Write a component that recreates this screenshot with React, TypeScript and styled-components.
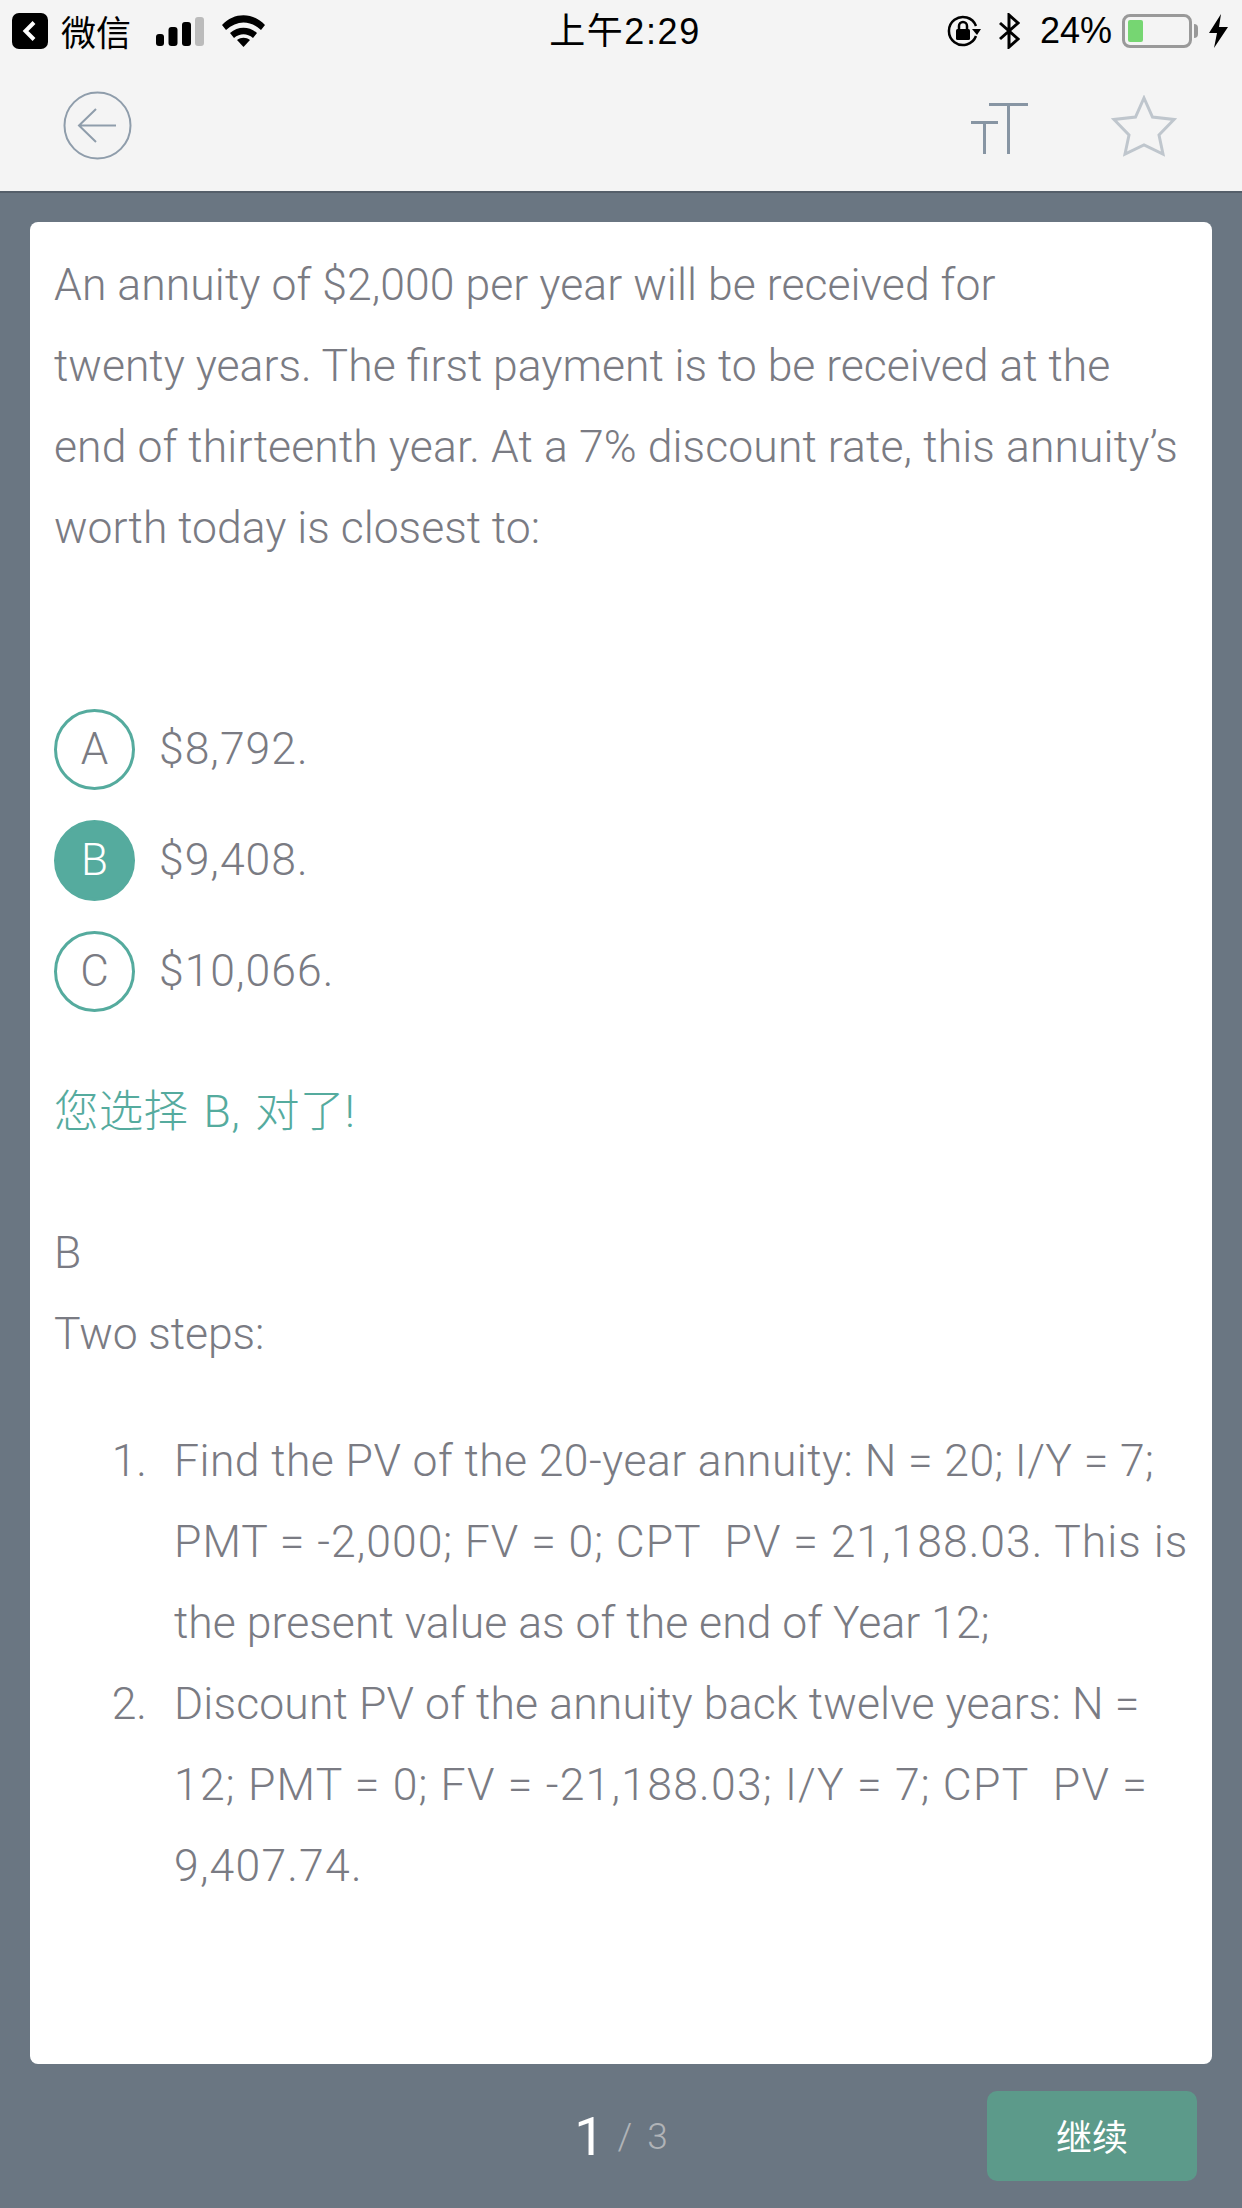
import React from "react";
import styled, { createGlobalStyle } from "styled-components";

const GlobalStyle = createGlobalStyle`
  html, body {
    margin: 0;
    padding: 0;
    background: #6a7682;
  }
  * {
    box-sizing: border-box;
  }
`;

const FONT = `Roboto, "Noto Sans CJK SC", sans-serif`;
const TEAL = "#55ab9e";
const INK = "#7a7b83";

const Page = styled.div`
  width: 1242px;
  height: 2208px;
  display: flex;
  flex-direction: column;
  overflow: hidden;
  background: #6a7682;
  font-family: ${FONT};
`;

const StatusBar = styled.div`
  height: 64px;
  padding: 0 14px 2px 12px;
  display: grid;
  grid-template-columns: 1fr auto 1fr;
  align-items: center;
  background: #f4f4f4;
  color: #000;
`;

const StatusLeft = styled.div`
  display: flex;
  align-items: center;
`;

const StatusRight = styled.div`
  display: flex;
  align-items: center;
  justify-content: flex-end;
`;

const BackChip = styled.svg`
  width: 36px;
  height: 36px;
  margin-right: 13px;
`;

const CarrierText = styled.span`
  font-family: "Noto Sans CJK SC", sans-serif;
  font-size: 35px;
  line-height: 40px;
  margin-right: 25px;
`;

const SignalBars = styled.svg`
  width: 48px;
  height: 29px;
  margin-right: 18px;
`;

const Clock = styled.span`
  font-family: "Liberation Sans", "Noto Sans CJK SC", sans-serif;
  font-size: 36px;
  line-height: 40px;
  letter-spacing: 1.6px;
  margin-left: 10px;
  padding-top: 2px;
`;

const RotationLock = styled.svg`
  width: 36px;
  height: 32px;
  margin-right: 17px;
`;

const BatteryPercent = styled.span`
  font-family: "Liberation Sans", sans-serif;
  font-size: 36px;
  line-height: 40px;
  margin: 0 10px 0 20px;
`;

const Battery = styled.div`
  position: relative;
  width: 70px;
  height: 34px;
  padding: 3px;
  border: 3px solid #999;
  border-radius: 8px;
  margin-right: 17px;

  &::before {
    content: "";
    display: block;
    width: 15px;
    height: 22px;
    background: #76d672;
    border-radius: 2px;
  }

  &::after {
    content: "";
    position: absolute;
    right: -9px;
    top: 7px;
    width: 4px;
    height: 14px;
    background: #999;
    border-radius: 0 4px 4px 0;
  }
`;

const Header = styled.header`
  height: 129px;
  flex: none;
  display: flex;
  align-items: center;
  padding: 0 65px 4px 63px;
  background: #f4f4f4;
  border-bottom: 2px solid #555f6a;
`;

const HeaderSpacer = styled.div`
  flex: 1;
`;

const FontIcon = styled.svg`
  width: 58px;
  height: 52px;
  margin: 7px 82px 0 0;
`;

const Card = styled.main`
  margin: 29px 30px 0;
  height: 1842px;
  flex: none;
  padding: 23px 24px 0;
  background: #fff;
  border-radius: 8px;
  color: ${INK};
  font-size: 44.5px;
  font-weight: 300;
  line-height: 81px;
`;

const TextLine = styled.div<{ $tracking?: number }>`
  white-space: nowrap;
  letter-spacing: ${({ $tracking }) => $tracking ?? 0}px;
`;

const OptionList = styled.div`
  margin-top: 140px;
  display: flex;
  flex-direction: column;
  gap: 30px;
`;

const OptionRow = styled.div`
  display: flex;
  align-items: center;
  gap: 24px;
  height: 81px;
  letter-spacing: 1px;
`;

const OptionBadge = styled.div<{ $selected?: boolean }>`
  width: 81px;
  height: 81px;
  display: flex;
  align-items: center;
  justify-content: center;
  border-radius: 50%;
  border: 3px solid ${TEAL};
  background: ${({ $selected }) => ($selected ? TEAL : "#fff")};
  color: ${({ $selected }) => ($selected ? "#fff" : INK)};
  font-size: 44px;
  letter-spacing: 0;
`;

const Feedback = styled.div`
  margin-top: 60px;
  color: ${TEAL};
  word-spacing: 4px;
  letter-spacing: 0.3px;
`;

const Explanation = styled.div`
  margin-top: 60px;
`;

const Steps = styled.ol`
  margin: 46px 0 0;
  padding: 0;
  list-style: none;
`;

const Step = styled.li`
  display: flex;
`;

const StepNumber = styled.span`
  width: 120px;
  padding-right: 27px;
  flex: none;
  text-align: right;
`;

const Footer = styled.footer`
  flex: 1;
  display: grid;
  grid-template-columns: 1fr auto 1fr;
  align-items: start;
  padding: 27px 45px 0;
`;

const Pager = styled.div`
  grid-column: 2;
  display: flex;
  align-items: center;
  height: 90px;
  color: #b0b3b7;
  font-size: 37px;
  font-weight: 300;
`;

const PagerCurrent = styled.span`
  color: #fff;
  font-size: 54px;
  font-weight: 400;
  margin-right: 13px;
`;

const PagerTotal = styled.span`
  margin-left: 15px;
`;

const ContinueButton = styled.button`
  grid-column: 3;
  justify-self: end;
  width: 210px;
  height: 90px;
  padding: 0 0 3px;
  border: 0;
  border-radius: 10px;
  background: #5c9a8a;
  color: #fff;
  font-family: ${FONT};
  font-size: 36px;
  font-weight: 400;
`;

const question = [
  { text: "An annuity of $2,000 per year will be received for", tracking: 0.07 },
  { text: "twenty years. The first payment is to be received at the", tracking: 0 },
  { text: "end of thirteenth year. At a 7% discount rate, this annuity’s", tracking: 0.11 },
  { text: "worth today is closest to:", tracking: 0 },
];

const options = [
  { key: "A", text: "$8,792." },
  { key: "B", text: "$9,408.", selected: true },
  { key: "C", text: "$10,066." },
];

const steps = [
  {
    n: "1.",
    lines: [
      { text: "Find the PV of the 20-year annuity: N = 20; I/Y = 7;", tracking: 0.43 },
      { text: "PMT = -2,000; FV = 0; CPT \u00a0PV = 21,188.03. This is", tracking: 1 },
      { text: "the present value as of the end of Year 12;", tracking: 0.05 },
    ],
  },
  {
    n: "2.",
    lines: [
      { text: "Discount PV of the annuity back twelve years: N =", tracking: 0.14 },
      { text: "12; PMT = 0; FV = -21,188.03; I/Y = 7; CPT \u00a0PV =", tracking: 1.25 },
      { text: "9,407.74.", tracking: 1.2 },
    ],
  },
];

const App: React.FC = () => (
  <Page>
    <GlobalStyle />
    <StatusBar>
      <StatusLeft>
        <BackChip viewBox="0 0 36 36">
          <rect width="36" height="36" rx="7" fill="#000" />
          <path d="M22 9.500 13.500 18l8.500 8.500" fill="none" stroke="#fff" strokeWidth="4" />
        </BackChip>
        <CarrierText>微信</CarrierText>
        <SignalBars viewBox="0 0 48 29">
          <rect x="0" y="17" width="8" height="12" rx="3" fill="#000" />
          <rect x="12.500" y="10" width="9" height="19" rx="3" fill="#000" />
          <rect x="26" y="5" width="9" height="24" rx="3" fill="#000" />
          <rect x="39" y="0" width="9" height="29" rx="3" fill="#bbb" />
        </SignalBars>
        <svg width="43" height="32" viewBox="0 0 43 32">
          <path d="M0 10C12-3 31-3 43 10l-4 5C28 5 15 5 4 15z" fill="#000" />
          <path d="M8 18c8-7 19-7 27 0l-4 5c-6-5-13-5-19 0z" fill="#000" />
          <path d="M15 25c4-3 9-3 13 0l-6.500 7z" fill="#000" />
        </svg>
      </StatusLeft>
      <Clock>上午2:29</Clock>
      <StatusRight>
        <RotationLock viewBox="0 0 36 32">
          <path d="M30 21a14 14 0 1 1 0-10" fill="none" stroke="#000" strokeWidth="2.500" />
          <path d="m26 14 9 0-4 6z" fill="#000" />
          <rect x="10" y="14" width="14" height="11" rx="1.500" fill="#000" />
          <path d="M13 14v-3a4 4 0 0 1 8 0v3" fill="none" stroke="#000" strokeWidth="2.500" />
        </RotationLock>
        <svg width="21" height="36" viewBox="0 0 21 36">
          <path d="M1 10 19 26 10 34V2l9 8L1 26" fill="none" stroke="#000" strokeWidth="3" />
        </svg>
        <BatteryPercent>24%</BatteryPercent>
        <Battery />
        <svg width="19" height="34" viewBox="0 0 19 34">
          <path d="M12 0 0 19h8L5 34 19 13h-9z" fill="#000" />
        </svg>
      </StatusRight>
    </StatusBar>

    <Header>
      <svg width="69" height="69" viewBox="0 0 69 69">
        <circle cx="34.500" cy="34.500" r="33" fill="none" stroke="#8f9dab" strokeWidth="2" />
        <path d="M53 34.500H16M33 18 16 34.500 33 51" fill="none" stroke="#8f9dab" strokeWidth="2" />
      </svg>
      <HeaderSpacer />
      <FontIcon viewBox="0 0 58 52">
        <path d="M0 19.500h27M13.500 19.500V51M18 1.500h39M37.500 1.500V51" fill="none" stroke="#8795a3" strokeWidth="3" />
      </FontIcon>
      <svg width="66" height="62" viewBox="0 0 66 62">
        <path
          d="M33 3 41.500 22 63 24.500 48 40 52 59 33 50 14 59 18 40 3 24.500 24.500 22z"
          fill="none"
          stroke="#bfc6cd"
          strokeWidth="3"
        />
      </svg>
    </Header>

    <Card>
      {question.map((line) => (
        <TextLine key={line.text} $tracking={line.tracking}>
          {line.text}
        </TextLine>
      ))}

      <OptionList>
        {options.map((o) => (
          <OptionRow key={o.key}>
            <OptionBadge $selected={o.selected}>{o.key}</OptionBadge>
            {o.text}
          </OptionRow>
        ))}
      </OptionList>

      <Feedback>您选择 B, 对了!</Feedback>

      <Explanation>
        <TextLine>B</TextLine>
        <TextLine $tracking={-0.1}>Two steps:</TextLine>
      </Explanation>

      <Steps>
        {steps.map((step) => (
          <Step key={step.n}>
            <StepNumber>{step.n}</StepNumber>
            <div>
              {step.lines.map((line) => (
                <TextLine key={line.text} $tracking={line.tracking}>
                  {line.text}
                </TextLine>
              ))}
            </div>
          </Step>
        ))}
      </Steps>
    </Card>

    <Footer>
      <Pager>
        <PagerCurrent>1</PagerCurrent>/<PagerTotal>3</PagerTotal>
      </Pager>
      <ContinueButton>继续</ContinueButton>
    </Footer>
  </Page>
);

export default App;
